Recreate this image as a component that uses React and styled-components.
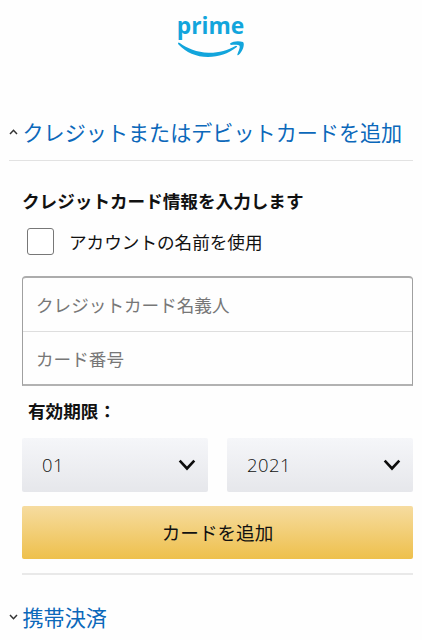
import React from 'react';
import styled, { createGlobalStyle } from 'styled-components';

const GlobalStyle = createGlobalStyle`
  * { box-sizing: border-box; }
  body {
    margin: 0;
    background: #fefefe;
    color: #111;
    font-family: "Noto Sans CJK JP", "Noto Sans", sans-serif;
  }
`;

const Page = styled.main`
  width: 422px;
  height: 640px;
  overflow: hidden;
  background: #fefefe;
`;

const Header = styled.header`
  display: flex;
  justify-content: center;
  height: 105px;
`;

const Logo = styled.svg`
  display: block;
  width: 78px;
  height: 66px;
  overflow: visible;
`;

const AccordionHeader = styled.h2`
  display: flex;
  align-items: center;
  height: ${(p) => p.$height}px;
  margin: 0 9px;
  padding-bottom: ${(p) => p.$bottom || 0}px;
  border-bottom: ${(p) => (p.$ruled ? '1px solid #e2e2e2' : 'none')};
  font-size: 21.1px;
  font-weight: 400;
  line-height: 30px;
  white-space: nowrap;
  color: #0b68ba;
`;

const Caret = styled.svg`
  flex: none;
  width: 9px;
  height: 8px;
  margin-right: 4.5px;
  fill: none;
  stroke: #333;
  stroke-width: 1.5;
`;

const Form = styled.section`
  display: flex;
  flex-direction: column;
  padding: 27px 9px 0 22px;
`;

const Title = styled.h3`
  margin: 0;
  font-size: 17.6px;
  font-weight: 700;
  line-height: 26px;
  white-space: nowrap;
`;

const CheckRow = styled.label`
  display: flex;
  align-items: center;
  gap: 15px;
  height: 28px;
  margin: 13px 0 21px 5px;
  font-size: 17.6px;
  line-height: 26px;
  white-space: nowrap;
`;

const CheckLabel = styled.span`
  padding-top: 2px;
`;

const CheckBox = styled.input`
  appearance: none;
  flex: none;
  width: 27px;
  height: 27px;
  margin: 0;
  border: 1px solid #777;
  border-radius: 3px;
  background: #fff;
`;

const FieldGroup = styled.div`
  height: 110px;
  border: 1px solid #a0a0a0;
  border-top: 2px solid #acacac;
  border-bottom: 2px solid #b2b2b2;
  border-radius: 4px 4px 0 0;
  overflow: hidden;
`;

const Field = styled.input`
  display: block;
  width: 100%;
  height: 53px;
  padding: 0 13px;
  border: 0;
  outline: 0;
  background: transparent;
  font-family: inherit;
  font-size: 17.6px;

  & + & { border-top: 1px solid #dedede; }
  &::placeholder { color: #777; opacity: 1; }
`;

const ExpiryLabel = styled(Title)`
  margin: 12px 0 14px 6px;
`;

const SelectRow = styled.div`
  display: grid;
  grid-template-columns: 186px 186px;
  justify-content: space-between;
  height: 54px;
`;

const SelectButton = styled.button`
  display: flex;
  align-items: center;
  justify-content: space-between;
  padding: 0 12px 0 20px;
  border: 0;
  border-radius: 2px;
  background: linear-gradient(#f5f6f9, #e6e7eb);
  color: #111;
  font-family: "Open Sans", "Noto Sans", sans-serif;
  font-size: 18.4px;
  font-weight: 300;
  letter-spacing: 0.5px;
`;

const SelectValue = styled.span`
  padding-bottom: 2px;
`;

const Chevron = styled.svg`
  width: 18px;
  height: 14px;
  fill: none;
  stroke: #0d0d0d;
  stroke-width: 2.6;
`;

const SubmitButton = styled.button`
  height: 53px;
  margin-top: 14px;
  padding: 0 0 2px;
  border: 0;
  border-radius: 2px;
  background: linear-gradient(#f6dca0, #eec04c);
  color: #111;
  font-family: inherit;
  font-size: 18.6px;
`;

const Divider = styled.hr`
  width: 100%;
  height: 2px;
  margin: 14px 0 0;
  border: 0;
  background: #e9e9e9;
`;

function PrimeLogo() {
  return (
    <Logo viewBox="0 0 78 66" role="img" aria-label="prime">
      <text x="4.8" y="34" textLength="67.5" lengthAdjust="spacingAndGlyphs"
        fontFamily="Open Sans, sans-serif" fontSize="23.5" fontWeight="700" fill="#12a5dc">prime</text>
      <path fill="#12a5dc" d="M6.5 42.6Q5.4 43.3 6.5 44.5C14 52.3 24 57 36 57C47 57 56 53.8 64.5 47.3Q66 45.7 64 45.7C55.5 50.4 46.5 52.9 36.5 52.7C25 52.4 15 48.4 7.8 43Z" />
      <path fill="#12a5dc" d="M58 43.6C61.5 41 67 40.9 71 42.1C73.2 44.5 70.5 51.8 66.8 54.8C65.7 55.6 65 54.9 65.5 53.9C66.7 50.9 68.3 47.2 67.5 45.7C66.4 44.2 62 44.7 58.7 44.9Z" />
    </Logo>
  );
}

function Select({ value, label }) {
  return (
    <SelectButton type="button" aria-label={label}>
      <SelectValue>{value}</SelectValue>
      <Chevron viewBox="0 0 18 14"><path d="M1.7 2.6 9 10.5 16.3 2.6" /></Chevron>
    </SelectButton>
  );
}

export default function App() {
  return (
    <>
      <GlobalStyle />
      <Page>
        <Header><PrimeLogo /></Header>
        <AccordionHeader $height={56} $bottom={2} $ruled>
          <Caret viewBox="0 0 9 8"><path d="M1 6 4.5 2.3 8 6" /></Caret>
          クレジットまたはデビットカードを追加
        </AccordionHeader>
        <Form>
          <Title>クレジットカード情報を入力します</Title>
          <CheckRow><CheckBox type="checkbox" /><CheckLabel>アカウントの名前を使用</CheckLabel></CheckRow>
          <FieldGroup>
            <Field placeholder="クレジットカード名義人" />
            <Field placeholder="カード番号" />
          </FieldGroup>
          <ExpiryLabel>有効期限：</ExpiryLabel>
          <SelectRow>
            <Select value="01" label="月" />
            <Select value="2021" label="年" />
          </SelectRow>
          <SubmitButton type="button">カードを追加</SubmitButton>
          <Divider />
        </Form>
        <AccordionHeader $height={83}>
          <Caret viewBox="0 0 9 8"><path d="M1 2 4.5 5.7 8 2" /></Caret>
          携帯決済
        </AccordionHeader>
      </Page>
    </>
  );
}
